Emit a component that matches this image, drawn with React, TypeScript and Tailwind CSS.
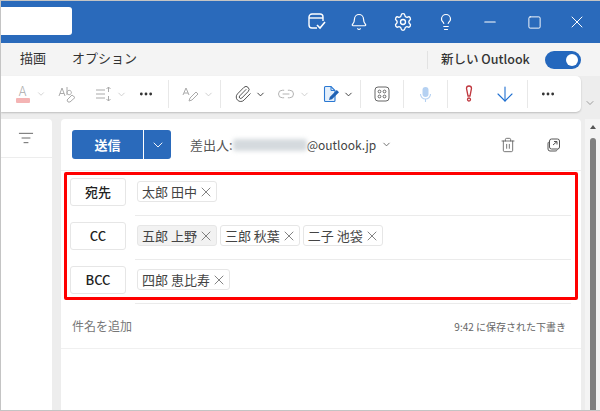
import React from "react";
import { X, ChevronDown, MoreHorizontal, Bell, Settings, Lightbulb, Minus, Square, Paperclip, Link2, ArrowDown, Trash2, ListFilter } from "lucide-react";

function Chip({ name, shaded }: { name: string; shaded?: boolean }) {
  return (
    <div className={`flex h-[21px] items-center rounded-[3px] border border-[#e6e6e6] pl-[4px] pr-[2px] text-[13px] text-[#444] ${shaded ? "bg-[#f2f2f2]" : "bg-white"}`}>
      <span>{name}</span>
      <X className="ml-[1px] h-[16px] w-[16px] text-[#555]" strokeWidth={1.1} />
    </div>
  );
}

function Row({ label, names, shadeFirst }: { label: string; names: string[]; shadeFirst?: boolean }) {
  return (
    <div className="flex h-[44px] items-start">
      <div className="mt-[6px] flex h-[28px] w-[56px] shrink-0 items-center justify-center rounded-[3px] border border-[#e6e6e6] text-[13px] font-medium text-[#222]">
        {label}
      </div>
      <div className="ml-[9px] h-full flex-1 border-b border-[#ebebeb]">
        <div className="mt-[9px] flex gap-[3px] pl-[2px]">
          {names.map((n, i) => (
            <Chip key={n} name={n} shaded={shadeFirst && i === 0} />
          ))}
        </div>
      </div>
    </div>
  );
}

function Sep() {
  return <div className="h-[28px] w-[1px] bg-[#e8e8e8]" />;
}

export default function App() {
  return (
    <div className="flex h-[411px] w-[600px] flex-col overflow-hidden border-b border-l border-t border-[#c4c4c4] bg-[#ededed] font-['Noto_Sans_CJK_JP','Noto_Sans',sans-serif]">
      {/* title bar */}
      <div className="flex h-[42px] shrink-0 items-center bg-[#2a6abb] text-white">
        <div className="mb-[2px] h-[28px] w-[71px] rounded-r-[3px] bg-white" />
        <div className="ml-[235px] flex items-center">
          <svg width="20" height="18" viewBox="0 0 20 18" fill="none" stroke="currentColor" strokeWidth="1.4">
            <path d="M10 15H5a3 3 0 0 1-3-3V4a3 3 0 0 1 3-3h8a3 3 0 0 1 3 3v4" />
            <path d="M2 5h14" />
            <path d="M10 12l3 3 5-6" strokeWidth="1.6" />
          </svg>
          <Bell className="ml-[23px] h-[18px] w-[18px]" strokeWidth={1.6} />
          <Settings className="ml-[25px] h-[20px] w-[20px]" strokeWidth={1.6} />
          <Lightbulb className="ml-[24px] h-[18px] w-[18px]" strokeWidth={1.6} />
          <Minus className="ml-[26px] h-[18px] w-[18px]" strokeWidth={1.4} />
          <Square className="ml-[28px] h-[15px] w-[15px]" strokeWidth={1.5} />
          <X className="ml-[25px] h-[20px] w-[20px]" strokeWidth={1.2} />
        </div>
      </div>
      {/* tabs */}
      <div className="flex h-[33px] shrink-0 items-center bg-[#f4f4f4] text-[13px] text-[#333]">
        <span className="mb-[3px] ml-[19px]">描画</span>
        <span className="mb-[3px] ml-[26px]">オプション</span>
        <div className="ml-[290px] h-[18px] w-[1px] bg-[#e2e2e2]" />
        <span className="ml-[13px] text-[12.5px] font-medium text-[#333]">新しい Outlook</span>
        <div className="ml-[15px] flex h-[18px] w-[36px] items-center justify-end rounded-full bg-[#2467bd] pr-[3px]">
          <div className="h-[12px] w-[12px] rounded-full bg-white" />
        </div>
      </div>
      {/* toolbar */}
      <div className="flex shrink-0 items-start">
        <div className="flex h-[36px] w-[580px] items-center rounded-r-[5px] bg-white shadow-[0_1px_2px_rgba(0,0,0,0.2)]">
          <div className="ml-[14px] flex w-[15px] flex-col items-center">
            <span className="text-[13px] font-light leading-[12px] text-[#aaa]">A</span>
            <div className="mt-[1px] h-[5px] w-[14px] rounded-[1px] bg-[#f4b4b4]" />
          </div>
          <ChevronDown className="ml-[6px] h-[10px] w-[10px] text-[#ccc]" />
          <svg width="18" height="18" viewBox="0 0 18 18" fill="none" stroke="#aaa" strokeWidth="1" className="ml-[12px]">
            <path d="M1 11 4 3l3 8M2 8.500h4" />
            <path d="M9 2v8M9 7.500a2.200 2.200 0 1 1 0 .1" />
            <path d="M9 15l5-5 3 2.500-5 4.500H10z" />
          </svg>
          <svg width="16" height="16" viewBox="0 0 16 16" fill="none" stroke="#aaa" strokeWidth="1" className="ml-[20px]">
            <path d="M0 4h9M0 8h9M0 12h9" />
            <path d="M12.500 1v5M10.500 3l2-2 2 2M12.500 10v5M10.500 13l2 2 2-2" />
          </svg>
          <ChevronDown className="ml-[4px] h-[11px] w-[11px] text-[#ccc]" />
          <MoreHorizontal className="ml-[11px] h-[16px] w-[16px] text-[#333]" strokeWidth={2.2} />
          <div className="ml-[14px]"><Sep /></div>
          <svg width="17" height="17" viewBox="0 0 17 17" fill="none" stroke="#aaa" strokeWidth="1" className="ml-[13px]">
            <path d="M1 9 4 2l3 7M2 7h4" />
            <path d="M7 15l1-3 6-6 2 2-6 6z" />
          </svg>
          <ChevronDown className="ml-[4px] h-[11px] w-[11px] text-[#ccc]" />
          <div className="ml-[6px]"><Sep /></div>
          <Paperclip className="ml-[13px] h-[18px] w-[18px] text-[#333]" strokeWidth={1.1} />
          <ChevronDown className="ml-[3px] h-[11px] w-[11px] text-[#333]" />
          <Link2 className="ml-[11px] h-[18px] w-[18px] text-[#aaa]" strokeWidth={1.2} />
          <ChevronDown className="ml-[4px] h-[11px] w-[11px] text-[#ccc]" />
          <svg width="18" height="18" viewBox="0 0 18 18" fill="none" className="ml-[12px]">
            <path d="M2.500 2.500a1 1 0 0 1 1-1h5.500l4 4V15.500a1 1 0 0 1-1 1h-8.500a1 1 0 0 1-1-1z" fill="#e4effb" stroke="#2a78d2" strokeWidth="1.1" />
            <path d="M9 1.500v4h4" stroke="#2a78d2" strokeWidth="1" />
            <path d="M7 15l.8-3 7-7 2.200 2.200-7 7z" fill="#1f62b5" />
          </svg>
          <ChevronDown className="ml-[3px] h-[11px] w-[11px] text-[#333]" />
          <div className="ml-[6px]"><Sep /></div>
          <svg width="16" height="16" viewBox="0 0 16 16" fill="none" stroke="#666" strokeWidth="1" className="ml-[13px]">
            <rect x="1" y="1" width="14" height="14" rx="3" />
            <circle cx="5.500" cy="5.500" r="1.400" />
            <circle cx="10.500" cy="5.500" r="1.400" />
            <circle cx="5.500" cy="10.500" r="1.400" />
            <circle cx="10.500" cy="10.500" r="1.400" />
          </svg>
          <div className="ml-[13px]"><Sep /></div>
          <svg width="17" height="17" viewBox="0 0 17 17" fill="none" className="ml-[13px]">
            <rect x="5.500" y="1" width="6" height="10" rx="3" fill="#b5d1f2" />
            <path d="M3.500 8a5 5 0 0 0 10 0M8.500 13v3" stroke="#b5d1f2" strokeWidth="1.100" />
          </svg>
          <div className="ml-[13px]"><Sep /></div>
          <svg width="10" height="18" viewBox="0 0 10 18" fill="none" stroke="#c0383f" strokeWidth="1.300" className="ml-[16px]">
            <path d="M2.500 3.500a2.500 2.500 0 0 1 5 0L6 11H4z" />
            <circle cx="5" cy="14.500" r="1.500" />
          </svg>
          <ArrowDown className="ml-[19px] h-[24px] w-[24px] text-[#1f6fd0]" strokeWidth={1.1} />
          <div className="ml-[10px]"><Sep /></div>
          <MoreHorizontal className="ml-[12px] h-[16px] w-[16px] text-[#333]" strokeWidth={2.2} />
        </div>
        <ChevronDown className="ml-[3px] mt-[21px] h-[12px] w-[12px] text-[#666]" strokeWidth={1.2} />
      </div>
      {/* body */}
      <div className="mt-[7px] flex min-h-0 flex-1">
        <div className="h-full w-[51px] shrink-0 rounded-tr-[4px] bg-white">
          <div className="flex h-[39px] items-center justify-end border-b border-[#ededed] pr-[18px]">
            <ListFilter className="h-[16px] w-[16px] text-[#444]" strokeWidth={1.2} />
          </div>
        </div>
        <div className="ml-[9px] flex h-full w-[520px] shrink-0 flex-col rounded-t-[4px] bg-white">
          <div className="flex h-[52px] shrink-0 items-center border-b border-[#f0f0f0] pl-[11px]">
            <div className="flex h-[29px] w-[71px] items-center justify-center rounded-l-[3px] bg-[#2a6abb] text-[13px] font-bold text-white">送信</div>
            <div className="ml-[1px] flex h-[29px] w-[27px] items-center justify-center rounded-r-[3px] bg-[#2a6abb] text-white">
              <ChevronDown className="h-[16px] w-[16px]" strokeWidth={1.4} />
            </div>
            <span className="ml-[19px] text-[13px] text-[#555]">差出人:</span>
            <div className="h-[12px] w-[74px] rounded-[3px] bg-[#d5dade] blur-[2px]" />
            <span className="text-[12px] text-[#444]">@outlook.jp</span>
            <ChevronDown className="ml-[5px] h-[11px] w-[11px] text-[#666]" />
            <Trash2 className="ml-[108px] h-[16px] w-[16px] text-[#555]" strokeWidth={1.2} />
            <svg width="14" height="14" viewBox="0 0 14 14" fill="none" stroke="#555" strokeWidth="1" className="ml-[31px]">
              <rect x="2.500" y="1" width="10" height="10" rx="2" />
              <path d="M2.500 3.500C1.500 4 1 4.500 1 6v5a2 2 0 0 0 2 2h5c1.500 0 2-.5 2.500-1.500" />
              <path d="M6 7l4-3.500M7 3.500h3v3" />
            </svg>
          </div>
          <div className="relative shrink-0 pl-[9px] pr-[10px] pt-[1px]">
            <Row label="宛先" names={["太郎 田中"]} />
            <Row label="CC" names={["五郎 上野", "三郎 秋葉", "二子 池袋"]} shadeFirst />
            <Row label="BCC" names={["四郎 恵比寿"]} />
            <div className="absolute left-[3px] top-[1px] h-[128px] w-[514px] rounded-[2px] border-[3px] border-[#ff0000]" />
          </div>
          <div className="flex h-[45px] shrink-0 items-center justify-between border-b border-[#f0f0f0] pl-[11px] pr-[15px]">
            <span className="text-[12px] text-[#777]">件名を追加</span>
            <span className="text-[10px] text-[#666]">9:42 に保存された下書き</span>
          </div>
        </div>
        {/* scrollbar */}
        <div className="ml-[4px] flex h-full w-[15px] flex-col items-center bg-[#f4f4f4]">
          <div className="mt-[6px] h-0 w-0 border-x-[3px] border-b-[4px] border-x-transparent border-b-[#555]" />
          <div className="mt-[9px] w-[6px] flex-1 rounded-t-full bg-[#808080]" />
        </div>
      </div>
    </div>
  );
}
